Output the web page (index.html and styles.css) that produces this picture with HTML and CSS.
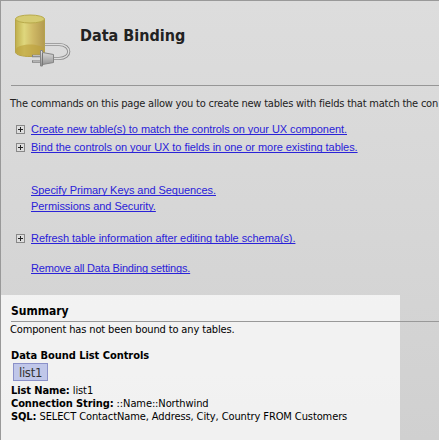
FILE: index.html
```
<!DOCTYPE html>
<html lang="en">
<head>
<meta charset="utf-8">
<title>Data Binding</title>
<link rel="stylesheet" href="styles.css">
</head>
<body>
<main class="page">
  <header class="header">
    <svg class="logo" width="64" height="60" viewBox="0 0 64 60">
      <defs>
        <linearGradient id="body"><stop offset="0" stop-color="#bfae4b"/><stop offset=".3" stop-color="#dfd77d"/><stop offset=".6" stop-color="#cfb965"/><stop offset="1" stop-color="#b39a50"/></linearGradient>
        <linearGradient id="plug" x2="0" y2="1"><stop offset="0" stop-color="#e2e2e2"/><stop offset="1" stop-color="#8e8e8e"/></linearGradient>
      </defs>
      <path d="M4.500 8v33c0 6 29 6 29 0V8z" fill="url(#body)" stroke="#b5a34c"/>
      <path d="M5 38c3-6 25-6 28 0v3c-3 6-25 6-28 0z" fill="#bda13c" opacity=".65"/>
      <ellipse cx="19" cy="8" rx="14.500" ry="4" fill="#d5cb72" stroke="#b8aa4b"/>
      <path d="M34 33.500h14c13 0 13 14 0 14h-6" fill="none" stroke="#8c8c8c" stroke-width="3.200"/>
      <path d="M34 33.500h14c13 0 13 14 0 14h-6" fill="none" stroke="#dedede" stroke-width="1.400"/>
      <path d="M21 45h9M21 50.500h9" stroke="#828282" stroke-width="2.400"/>
      <path d="M22 44.700h8M22 50.200h8" stroke="#ddd" stroke-width=".8"/>
      <path d="M29.500 39.500h2v2l11 2v8l-11 2v1.500h-2z" fill="url(#plug)" stroke="#858585"/>
      <path d="M31.500 42v12" stroke="#777"/>
    </svg>
    <h1 class="title">Data Binding</h1>
  </header>
  <p class="intro">The commands on this page allow you to create new tables with fields that match the con</p>
  <nav class="links">
    <div class="link-row"><i class="expand"></i><a href="#">Create new table(s) to match the controls on your UX component.</a></div>
    <div class="link-row"><i class="expand"></i><a href="#">Bind the controls on your UX to fields in one or more existing tables.</a></div>
    <div class="link-row plain keys"><a href="#">Specify Primary Keys and Sequences.</a></div>
    <div class="link-row plain security"><a href="#">Permissions and Security.</a></div>
    <div class="link-row refresh"><i class="expand"></i><a href="#">Refresh table information after editing table schema(s).</a></div>
    <div class="link-row plain remove"><a href="#">Remove all Data Binding settings.</a></div>
  </nav>
  <section class="summary">
    <h2 class="summary-title">Summary</h2>
    <p class="line status">Component has not been bound to any tables.</p>
    <h3 class="line list-title">Data Bound List Controls</h3>
    <div class="chip">list1</div>
    <p class="line"><b>List Name:</b> list1</p>
    <p class="line"><b>Connection String:</b> ::Name::Northwind</p>
    <p class="line"><b>SQL:</b> SELECT ContactName, Address, City, Country FROM Customers</p>
  </section>
</main>
</body>
</html>
```
FILE: styles.css
```
* { box-sizing: border-box; }
body { margin: 0; overflow: hidden; }
h1, h2, h3, p { margin: 0; white-space: nowrap; }
.page {
  width: 439px;
  height: 440px;
  overflow: hidden;
  border-top: 1px solid #999;
  border-left: 1px solid #999;
  background: linear-gradient(#dddddd, #d0d0d0);
  font-family: "DejaVu Sans Condensed", "DejaVu Sans", sans-serif;
  font-stretch: condensed;
  font-size: 11px;
  color: #111;
}
.header {
  display: flex;
  height: 85px;
  margin-left: 10px;
  padding-top: 10px;
  border-bottom: 1px solid #969696;
}
.logo { flex: none; }
.title { margin-left: 5px; padding-top: 14px; font-size: 16px; line-height: 22px; color: #222; }
.intro { margin: 10px 0 0 9px; line-height: 16px; letter-spacing: -.22px; color: #222; }
.links { padding: 8px 0 0 15px; font-family: "Liberation Sans", sans-serif; letter-spacing: -.06px; }
.link-row { display: flex; align-items: center; height: 18px; white-space: nowrap; }
.link-row a { color: #2a22d8; text-decoration: underline; text-underline-offset: 1px; text-decoration-thickness: 1px; text-decoration-skip-ink: none; }
.expand {
  width: 9px;
  height: 9px;
  margin-right: 6px;
  border: 1px solid #888;
  background:
    linear-gradient(#222, #222) center / 5px 1px no-repeat,
    linear-gradient(#222, #222) center / 1px 5px no-repeat,
    #dedede;
}
.plain { padding-left: 15px; height: 16px; }
.keys { margin-top: 26px; }
.refresh { margin-top: 15px; }
.remove { margin-top: 13px; letter-spacing: -.18px; }
.summary { width: 399px; height: 145px; margin-top: 19px; padding-left: 10px; background: rgba(255, 255, 255, .7); color: #000; }
.summary-title { width: 428px; height: 27px; padding-top: 8px; border-bottom: 1px solid #999; font-size: 12px; line-height: 16px; }
.line { height: 13px; line-height: 13px; letter-spacing: -.1px; }
.status { margin: 1px 0 0 -1px; letter-spacing: -.14px; }
.list-title { margin-top: 13px; font-size: 11px; letter-spacing: -.05px; }
.chip { width: 35px; height: 18px; margin: 1px 0 3px 2px; border: 1px solid #8b91c9; background: #c0c7e9; font-size: 13px; letter-spacing: -.3px; line-height: 17px; text-align: center; color: #333; white-space: nowrap; }
```
